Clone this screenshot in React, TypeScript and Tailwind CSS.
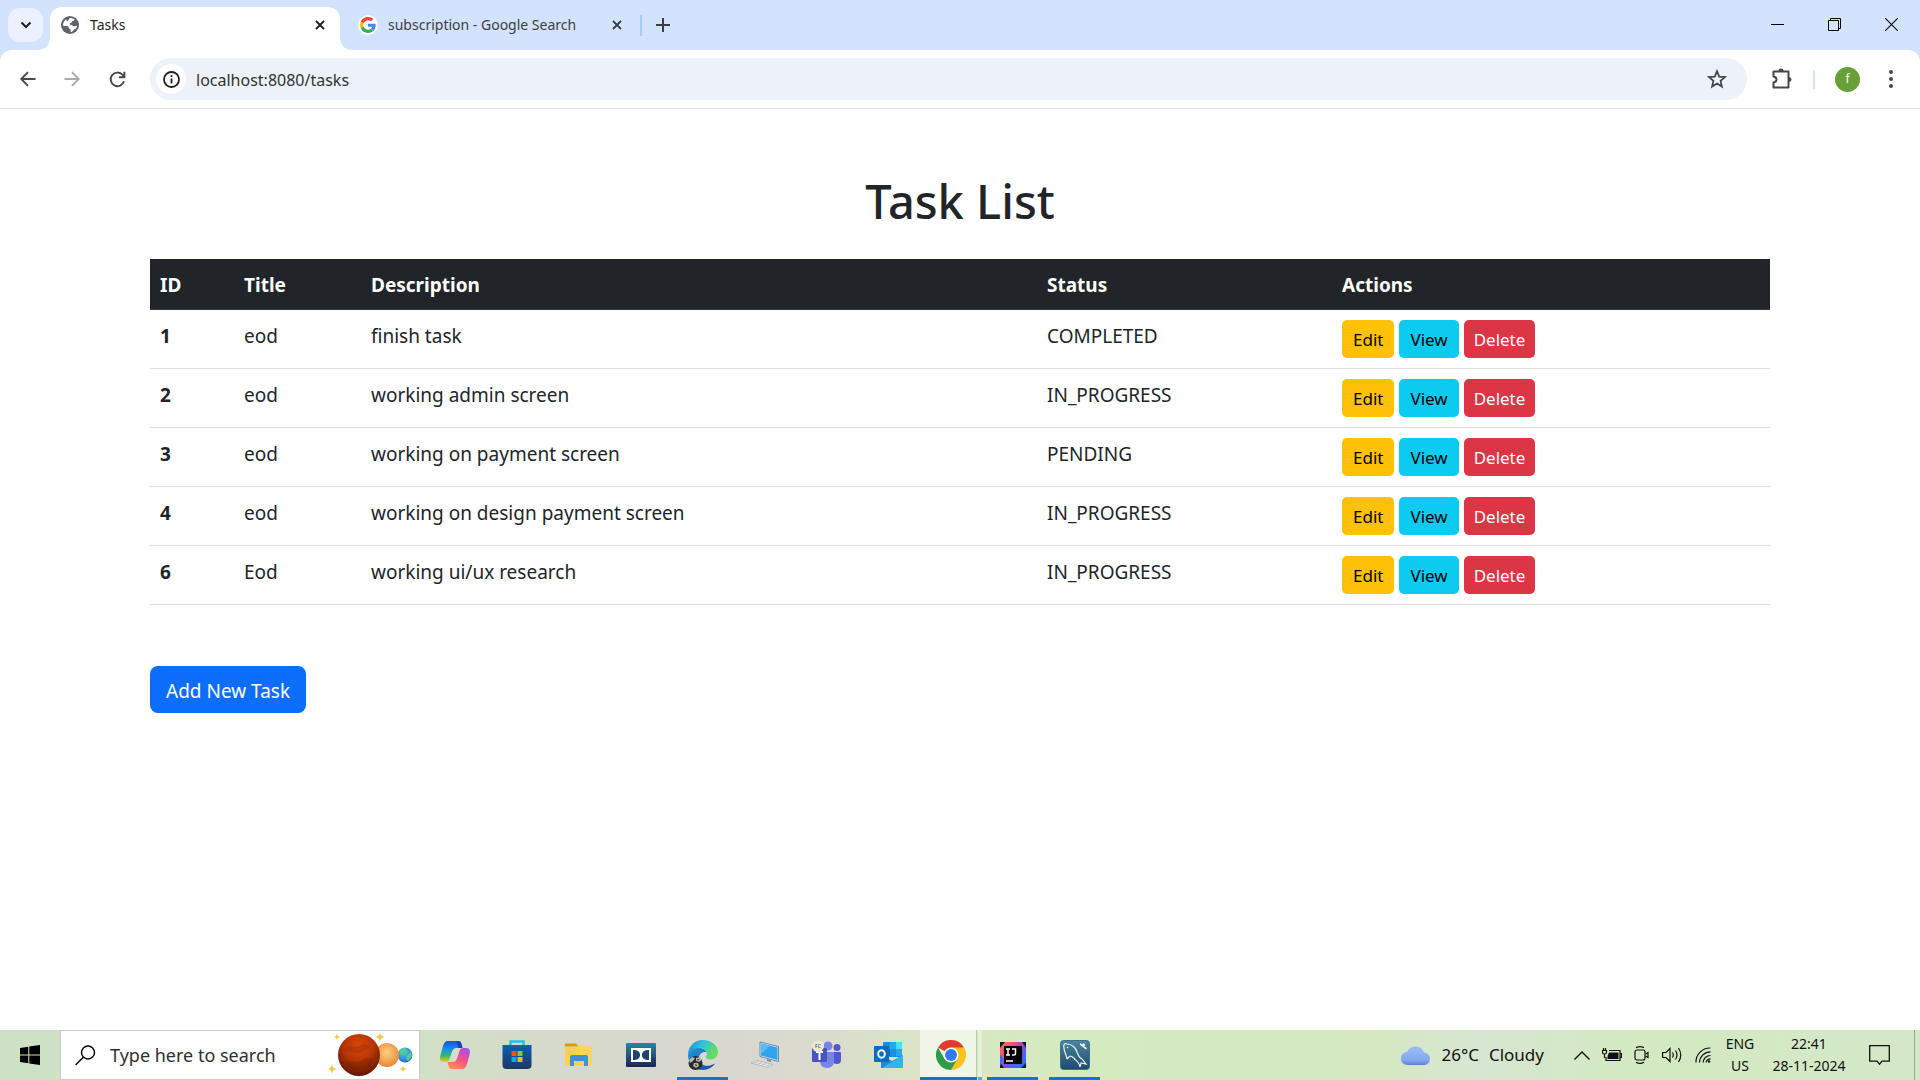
import React from "react";

type Task = { id: number; title: string; description: string; status: string };

const tasks: Task[] = [
  { id: 1, title: "eod", description: "finish task", status: "COMPLETED" },
  { id: 2, title: "eod", description: "working admin screen", status: "IN_PROGRESS" },
  { id: 3, title: "eod", description: "working on payment screen", status: "PENDING" },
  { id: 4, title: "eod", description: "working on design payment screen", status: "IN_PROGRESS" },
  { id: 6, title: "Eod", description: "working ui/ux research", status: "IN_PROGRESS" },
];

function CloseX() {
  return (
    <svg width="10" height="10" viewBox="0 0 10 10" stroke="currentColor" strokeWidth="1.8" fill="none">
      <path d="M1 1l8 8M9 1l-8 8" />
    </svg>
  );
}

function GlobeIcon() {
  return (
    <svg width="18" height="18" viewBox="0 0 18 18">
      <circle cx="9" cy="9" r="9" fill="#5f6368" />
      <path d="M9.2 1.9c1.700 0 3.200.5 4.400 1.500-.2 1.100-.9 1.600-1.800 1.700-1 .1-.9.900-1.200 1.500-.4.700-1.600.4-1.900 1.200-.3.900.6 1.100 1.500 1.100 1.300 0 1.500.9 2.400 1.200 1 .3 2.500-.3 3.400-.3-.1 1-.5 2.100-1.100 3-1.300.2-1.900.6-2.600 1.700-.6.800-1.500 1.500-2.400 1.500-.5-.6.100-1.500-.3-2.200-.5-.9-1.500-.9-1.700-2.100-.2-1.300-1.200-1.600-2.500-1.700L2 9.700C1.900 6.900 3.100 4.700 5 3.300c.5.500.3 1.500 1.100 1.700 1.300.3 1.200-1.300 1.800-2 .3-.4.700-.8 1.300-1.100z" fill="#fff" />
    </svg>
  );
}

function GoogleIcon() {
  return (
    <svg width="16" height="16" viewBox="0 0 48 48">
      <path fill="#EA4335" d="M24 9.500c3.540 0 6.710 1.220 9.210 3.600l6.850-6.850C35.900 2.380 30.470 0 24 0 14.620 0 6.510 5.380 2.560 13.220l7.980 6.190C12.430 13.720 17.740 9.500 24 9.500z" />
      <path fill="#4285F4" d="M46.980 24.550c0-1.570-.15-3.090-.38-4.550H24v9.020h12.940c-.58 2.960-2.260 5.480-4.780 7.180l7.730 6c4.510-4.180 7.090-10.360 7.090-17.650z" />
      <path fill="#FBBC05" d="M10.530 28.590c-.48-1.450-.76-2.990-.76-4.590s.27-3.140.76-4.590l-7.980-6.190C.92 16.460 0 20.120 0 24c0 3.880.92 7.540 2.560 10.780l7.970-6.190z" />
      <path fill="#34A853" d="M24 48c6.480 0 11.930-2.130 15.890-5.810l-7.730-6c-2.150 1.450-4.920 2.300-8.160 2.300-6.260 0-11.570-4.220-13.470-9.910l-7.980 6.190C6.510 42.620 14.620 48 24 48z" />
    </svg>
  );
}

function TabStrip() {
  return (
    <header className="flex h-[50px] items-start bg-[#d3e3fd] text-[#1f1f1f]">
      <button aria-label="Search tabs" className="mt-2 ml-2 flex h-[34px] w-[35px] items-center justify-center rounded-xl bg-[#ebf1fe]">
        <svg width="12" height="8" viewBox="0 0 12 8" fill="none" stroke="#1f1f1f" strokeWidth="2">
          <path d="M1.500 1.500L6 6l4.500-4.500" />
        </svg>
      </button>
      <div className="relative mt-[7px] ml-[7px] flex h-[43px] w-[290px] rounded-t-xl bg-white pb-[7px] pl-[11px]">
        <svg className="absolute bottom-0 -left-3" width="12" height="12" viewBox="0 0 12 12"><path d="M12 0v12H0C7 12 12 7 12 0z" fill="#fff" /></svg>
        <svg className="absolute -right-3 bottom-0" width="12" height="12" viewBox="0 0 12 12"><path d="M0 0v12h12C5 12 0 7 0 0z" fill="#fff" /></svg>
        <button className="flex grow items-center gap-[11px] text-left text-sm"><GlobeIcon />Tasks</button>
        <button aria-label="Close Tasks" className="flex w-10 items-center justify-center"><CloseX /></button>
      </div>
      <div className="mt-[7px] flex h-9 w-[302px] items-center border-r-2 border-[#a8c7fa] pl-[18px] [border-image:linear-gradient(transparent_9px,#a8c7fa_9px,#a8c7fa_28px,transparent_28px)_1]">
        <button className="flex grow items-center gap-[10px] text-left text-sm whitespace-nowrap text-[#3c4043]">
          <span className="flex size-5 items-center justify-center rounded-full bg-white"><GoogleIcon /></span>
          subscription - Google Search
        </button>
        <button aria-label="Close search" className="mr-[3px] flex w-10 items-center justify-center text-[#3c4043]"><CloseX /></button>
      </div>
      <button aria-label="New tab" className="mt-[7px] flex h-9 w-[42px] items-center justify-center">
        <svg width="14" height="14" viewBox="0 0 14 14" stroke="#3c4043" strokeWidth="2"><path d="M7 0v14M0 7h14" /></svg>
      </button>
      <div className="ml-auto flex h-12 items-center text-black">
        <button aria-label="Minimize" className="flex h-full w-[57px] items-center justify-center">
          <svg width="13" height="13" viewBox="0 0 13 13"><path d="M0 6h13v1H0z" fill="#000" /></svg>
        </button>
        <button aria-label="Restore" className="flex h-full w-[57px] items-center justify-center">
          <svg width="13" height="13" viewBox="0 0 13 13" fill="none" stroke="#000"><path d="M.5 2.500h10v10H.5zM2.500 2.500v-2h10v10h-2" /></svg>
        </button>
        <button aria-label="Close" className="flex h-full w-[57px] items-center justify-center">
          <svg width="13" height="13" viewBox="0 0 13 13" stroke="#111" strokeWidth="1.200"><path d="M0 0l13 13M13 0L0 13" /></svg>
        </button>
      </div>
    </header>
  );
}

function Toolbar() {
  return (
    <div className="bg-[#d3e3fd]">
      <div className="flex h-[59px] items-center rounded-t-xl border-b border-[#dedede] bg-white">
        <button aria-label="Back" className="flex w-11 justify-center pl-3">
          <svg width="16" height="16" viewBox="0 0 16 16" fill="none" stroke="#474747" strokeWidth="1.900"><path d="M15.500 8H1.500M8 1.200L1.300 8 8 14.800" /></svg>
        </button>
        <button aria-label="Forward" className="flex w-14 justify-center" disabled>
          <svg width="16" height="16" viewBox="0 0 16 16" fill="none" stroke="#ababab" strokeWidth="1.900"><path d="M.5 8h14M8 1.200L14.700 8 8 14.800" /></svg>
        </button>
        <button aria-label="Reload" className="mr-[15px] flex w-[35px] justify-center">
          <svg width="17" height="17" viewBox="0 0 17 17" fill="none" stroke="#474747" strokeWidth="1.900"><path d="M15 10.300A6.800 6.800 0 1 1 13.600 3.900L15.400 6M15.400.8V6.200H10" /></svg>
        </button>
        <div className="flex h-[42px] grow items-center rounded-full bg-[#ecf1fa] pr-5 pl-[6px]">
          <button aria-label="View site information" className="flex size-[30px] items-center justify-center rounded-full bg-white">
            <svg width="17" height="17" viewBox="0 0 17 17" fill="none" stroke="#1f1f1f" strokeWidth="1.800"><circle cx="8.500" cy="8.500" r="7.500" /><path d="M8.500 7.500v5M8.500 4.200v1.900" /></svg>
          </button>
          <input aria-label="Address" defaultValue="localhost:8080/tasks" className="ml-[10px] grow bg-transparent pt-px text-base text-[#333] outline-none" />
          <button aria-label="Bookmark this tab">
            <svg width="20" height="20" viewBox="0 0 20 20" fill="none" stroke="#474747" strokeWidth="1.800"><path d="M10 2.200l2.200 5.400 5.800.5-4.400 3.800 1.300 5.700-4.900-3-4.900 3 1.300-5.700L2 8.100l5.800-.5z" /></svg>
          </button>
        </div>
        <button aria-label="Extensions" className="ml-6 flex">
          <svg width="22" height="22" viewBox="0 0 22 22" fill="none" stroke="#474747" strokeWidth="2">
            <path d="M2.500 3.500h15v16h-15v-5c4-.5 4-5.500 0-6z" strokeLinejoin="round" />
            <path d="M7.500 3a2.500 2.500 0 0 1 5 0zM18 9a2.500 2.500 0 0 1 0 5z" fill="#474747" stroke="none" />
          </svg>
        </button>
        <span className="ml-5 h-[19px] w-[2px] bg-[#d3e3fd]" />
        <button aria-label="Profile" className="ml-5 flex size-[25px] items-center justify-center rounded-full bg-[#689f38] text-xs text-white">f</button>
        <button aria-label="Menu" className="mr-[18px] ml-5 flex w-[22px] justify-center">
          <svg width="4" height="18" viewBox="0 0 4 18" fill="#474747"><circle cx="2" cy="2" r="2" /><circle cx="2" cy="9" r="2" /><circle cx="2" cy="16" r="2" /></svg>
        </button>
      </div>
    </div>
  );
}

function TaskPage() {
  return (
    <main className="grow bg-white px-[150px] pt-[62px] text-[19px] leading-[30px] text-[#212529]">
      <h1 className="text-center text-[47px] leading-[60px] font-medium">Task List</h1>
      <table className="mt-7 w-full table-fixed border-collapse text-left">
        <colgroup>
          <col className="w-[84px]" />
          <col className="w-[127px]" />
          <col />
          <col className="w-[295px]" />
          <col className="w-[438px]" />
        </colgroup>
        <thead className="bg-[#212529] text-white">
          <tr className="border-b border-[#373b3e]">
            {["ID", "Title", "Description", "Status", "Actions"].map((h) => (
              <th key={h} scope="col" className="px-[10px] pt-[11px] pb-[9px] font-bold">{h}</th>
            ))}
          </tr>
        </thead>
        <tbody>
          {tasks.map((t) => (
            <tr key={t.id} className="border-b border-[#dee2e6] align-top">
              <th scope="row" className="px-[10px] pt-[11px] pb-[9px] font-bold">{t.id}</th>
              <td className="px-[10px] pt-[11px] pb-[9px]">{t.title}</td>
              <td className="px-[10px] pt-[11px] pb-[9px]">{t.description}</td>
              <td className="px-[10px] pt-[11px] pb-[9px]">{t.status}</td>
              <td className="p-[10px]">
                <div className="flex gap-[5px] text-[17px]">
                  <a href="#edit" className="flex h-[38px] items-center rounded-[5px] bg-[#ffc107] px-[11px] pt-px text-black">Edit</a>
                  <a href="#view" className="flex h-[38px] items-center rounded-[5px] bg-[#0dcaf0] px-[11px] pt-px text-black">View</a>
                  <button className="flex h-[38px] items-center rounded-[5px] bg-[#dc3545] px-[10px] pt-px text-white">Delete</button>
                </div>
              </td>
            </tr>
          ))}
        </tbody>
      </table>
      <a href="#new" className="mt-[61px] inline-flex h-[47px] items-center rounded-lg bg-[#0d6efd] px-4 pt-[2px] text-white">Add New Task</a>
    </main>
  );
}

function Planets() {
  const star = "M0-5C.8-1.500 1.500-.8 5 0 1.500.8.8 1.500 0 5-.8 1.500-1.500.8-5 0-1.500-.8-.8-1.500 0-5z";
  return (
    <svg width="86" height="48" viewBox="0 0 86 48" className="mr-1 shrink-0">
      <defs>
        <radialGradient id="mars" cx=".5" cy=".3" r=".7"><stop offset="0" stopColor="#d94a0a" /><stop offset=".5" stopColor="#b73505" /><stop offset="1" stopColor="#5e1703" /></radialGradient>
        <radialGradient id="venus" cx=".5" cy=".4" r=".6"><stop offset="0" stopColor="#ffd07a" /><stop offset="1" stopColor="#e8853a" /></radialGradient>
        <radialGradient id="earth" cx=".4" cy=".3" r=".7"><stop offset="0" stopColor="#5cc8f5" /><stop offset="1" stopColor="#2470d0" /></radialGradient>
      </defs>
      <circle cx="76" cy="24" r="7.500" fill="url(#earth)" />
      <path d="M71 19l4-2 3 2-1 4-3 1-3-2zM78 24l4-3 1 4-4 5-2-2z" fill="#4cd08a" />
      <circle cx="58" cy="24" r="12" fill="url(#venus)" />
      <circle cx="30" cy="24" r="21" fill="url(#mars)" />
      <path d="M14 20c5-8 12-2 18-6 3-2 8 0 10 4-5-1-7 4-12 4-6 1-9-4-16-2z" fill="#a52d05" opacity=".45" />
      <path d="M16 32c7-4 10 1 17-3 5-3 8-2 12-1-2 7-8 11-15 11-6 0-11-3-14-7z" fill="#6b1b03" opacity=".3" />
      <g fill="#ecc94b">
        <path d={star} transform="translate(8 6) scale(.7)" />
        <path d={star} transform="translate(51 6)" />
        <path d={star} transform="translate(3 38)" />
        <path d={star} transform="translate(74 38) scale(.7)" />
      </g>
    </svg>
  );
}

function CopilotIcon() {
  return (
    <svg width="32" height="32" viewBox="0 0 32 32">
      <defs>
        <linearGradient id="cpA" x1="0" y1="0" x2="0" y2="1"><stop offset="0" stopColor="#1b4fd6" /><stop offset=".4" stopColor="#1594e6" /><stop offset=".7" stopColor="#3bb56e" /><stop offset="1" stopColor="#f0cd23" /></linearGradient>
        <linearGradient id="cpB" x1=".8" y1="0" x2=".3" y2="1"><stop offset="0" stopColor="#a64df0" /><stop offset=".5" stopColor="#f2508a" /><stop offset="1" stopColor="#ff8d4d" /></linearGradient>
      </defs>
      <path d="M9 2h10c2 0 3 1 3.500 3l1 4h-6c-3 0-4 2-5 5l-2 6c-.6 2-1.500 3-3.500 3H5c-4 0-4.500-3-3.500-7L4 7c1-3 2-5 5-5z" fill="url(#cpA)" />
      <path d="M23 30H13c-2 0-3-1-3.500-3l-1-4h5c3 0 4-2 5-5l2-6c.6-2 1.500-3 3.500-3h3c4 0 4.500 3 3.500 7L28 25c-1 3-2 5-5 5z" fill="url(#cpB)" />
      <path d="M17 2h2c2 0 3 1 3.500 3l1 4h-4L17 2z" fill="#1845b8" />
    </svg>
  );
}

function StoreIcon() {
  return (
    <svg width="30" height="32" viewBox="0 0 30 32">
      <defs><linearGradient id="st" x1="0" y1="0" x2="0" y2="1"><stop offset="0" stopColor="#0a62b0" /><stop offset="1" stopColor="#1d3765" /></linearGradient></defs>
      <path d="M8.500 7V2.500h13V7" fill="none" stroke="#28bdf0" strokeWidth="2.500" />
      <path d="M.5 6h29v20a4 4 0 0 1-4 4h-21a4 4 0 0 1-4-4z" fill="url(#st)" />
      <path d="M9.500 12H14.500v5h-5z" fill="#f1511b" /><path d="M15.500 12h5v5h-5z" fill="#80cc28" /><path d="M9.500 18h5v5h-5z" fill="#00adef" /><path d="M15.500 18h5v5h-5z" fill="#fbbc09" />
    </svg>
  );
}

function ExplorerIcon() {
  return (
    <svg width="28" height="26" viewBox="0 0 28 26">
      <path d="M0 1.500h11l2.500 3H0z" fill="#d99a07" />
      <path d="M0 5l13-.5L15 3h12v20H0z" fill="#ffd562" />
      <path d="M0 5l13-.5L15 3V23H0z" fill="#ffcb45" opacity=".5" />
      <path d="M5 24V15q0-2 2-2h14q2 0 2 2v9h-4v-5H9v5z" fill="#3a94dc" />
    </svg>
  );
}

function DolbyIcon() {
  return (
    <svg width="30" height="24" viewBox="0 0 30 24">
      <defs><linearGradient id="db" x1="0" y1="0" x2="0" y2="1"><stop offset="0" stopColor="#25899e" /><stop offset="1" stopColor="#1c2458" /></linearGradient></defs>
      <rect width="30" height="24" rx="1" fill="url(#db)" />
      <rect x="5" y="5" width="20" height="14" fill="#fff" />
      <path d="M7 7h1.500c7.500 0 7.500 10 0 10H7zM23 7h-1.500c-7.500 0-7.500 10 0 10H23z" fill="#20426f" />
    </svg>
  );
}

function EdgeIcon() {
  return (
    <svg width="30" height="30" viewBox="0 0 30 30">
      <defs>
        <linearGradient id="eg" x1="0" y1="0" x2="1" y2=".4"><stop offset="0" stopColor="#1c86d1" /><stop offset=".5" stopColor="#2fc2df" /><stop offset="1" stopColor="#65de5e" /></linearGradient>
        <linearGradient id="eb" x1="0" y1="0" x2="1" y2="1"><stop offset="0" stopColor="#1b9de2" /><stop offset="1" stopColor="#134a9c" /></linearGradient>
      </defs>
      <path d="M15 0c9 0 15 6 15 12 0 5-4 7.500-7.500 7.500S18 18 18 17c0-.6 1-1.500 1-3.500C19 10 16 8 12 8S1 10 0 15C0 6 7 0 15 0z" fill="url(#eg)" />
      <path d="M0 15C1 10 6 8 11 8c4 0 7 2 7.500 4.500C15 11 11 14 11 18c0 5 5 9 11 7.500 2-.4 3.500-1.500 5-2C25 27 20 30 15 30 6 30 0 23 0 15z" fill="url(#eb)" />
      <circle cx="7.500" cy="23" r="7" fill="#292a2c" />
      <path d="M1 20l3-3 3 1-2 3-3 2zM8 18l4-1 2 3-3 2-3-1zM6 23l4 0 1 3-3 2-3-2z" fill="#b7b5ad" />
      <path d="M9 19l2 .5-1 1.500zM7 24l2 1-1 1.500z" fill="#111" />
    </svg>
  );
}

function ComputerIcon() {
  return (
    <svg width="28" height="28" viewBox="0 0 28 28">
      <path d="M9 1l18.500 4.500v15L9 15.500z" fill="#cfe6f5" stroke="#4f7a95" strokeWidth=".8" />
      <path d="M10 2.500L26.500 6.500V19L10 14.500z" fill="#30a3ed" />
      <path d="M10 2.500l9 2.200L10 13z" fill="#58bdf5" />
      <path d="M16 18l4 1v2l-4-1z" fill="#7c8a90" />
      <path d="M0 22l5.500-2.500L22 23.500 17 26.500z" fill="#eceeee" stroke="#a3abae" strokeWidth=".7" />
      <path d="M3 21l16 4M7 20l-3 2.500M11 21l-4 2.500M15 22l-4 2.500M19 23l-4 2.500" stroke="#b4babc" strokeWidth=".7" />
    </svg>
  );
}

function TeamsIcon() {
  return (
    <svg width="30" height="28" viewBox="0 0 30 28">
      <circle cx="25" cy="6.500" r="3.500" fill="#5059c9" /><path d="M20 11h8q1 0 1 1v7q0 4-4 4-5 0-5-5z" fill="#5059c9" />
      <circle cx="16" cy="5" r="4.500" fill="#7b83eb" /><path d="M8 11h14v9q0 7-7 7t-7-7z" fill="#7b83eb" />
      <rect x="0" y="7" width="15" height="14" rx="1" fill="#4b53bc" /><path d="M4 11h7M7.500 11v8" stroke="#fff" strokeWidth="2" />
      <circle cx="6" cy="5" r="6" fill="#e5ead8" />
      <text x="6" y="7" textAnchor="middle" fontSize="5" fill="#3a3a3a">FC</text>
    </svg>
  );
}

function OutlookIcon() {
  return (
    <svg width="30" height="28" viewBox="0 0 30 28">
      <path d="M9 2q0-1 1-1h17q1 0 1 1v14H9z" fill="#1490df" /><path d="M16 1h6v7h-6z" fill="#28a8ea" /><path d="M22 1h6v7h-6z" fill="#50d9ff" /><path d="M22 8h6v7h-6z" fill="#28a8ea" /><path d="M9 8h7v7H9z" fill="#0364b8" />
      <path d="M7 27V14l11 6 11-6v12q0 1-1 1z" fill="#1a8be0" /><path d="M29 14v12q0 1-1 1H8L29 14z" fill="#35b3f1" />
      <rect y="5" width="15" height="16" rx="1" fill="#0f6cbd" />
      <ellipse cx="7.500" cy="13" rx="3.300" ry="3.800" fill="none" stroke="#fff" strokeWidth="2" />
    </svg>
  );
}

function ChromeIcon() {
  return (
    <svg width="30" height="30" viewBox="0 0 48 48">
      <path d="M24 24L3.200 12A24 24 0 0 1 44.800 12z" fill="#e33b2e" />
      <path d="M24 12h20.800A24 24 0 0 1 24 48L34.400 30z" fill="#fcc31e" />
      <path d="M3.200 12A24 24 0 0 0 24 48L34.400 30H24L13.600 30z" fill="#2d9c49" />
      <circle cx="24" cy="24" r="12" fill="#fff" /><circle cx="24" cy="24" r="9.500" fill="#2f7af0" />
    </svg>
  );
}

function IntellijIcon() {
  return (
    <svg width="26" height="26" viewBox="0 0 26 26">
      <defs><linearGradient id="ij" x1="0" y1="0" x2="1" y2="1"><stop offset="0" stopColor="#fc801d" /><stop offset=".35" stopColor="#f0409a" /><stop offset=".55" stopColor="#7850e8" /><stop offset="1" stopColor="#087cfa" /></linearGradient></defs>
      <rect width="26" height="26" fill="url(#ij)" /><path d="M0 0h5L0 6zM26 0v6l-4-6zM0 26v-6l4 6zM26 26h-5l5-5z" fill="#1c1231" />
      <path d="M0 12l3 6-3 6z" fill="#087cfa" />
      <rect x="4" y="4" width="18" height="18" fill="#080308" />
      <path d="M6 7h4M8 7v6M6 13h4M12 7h3.500v4.500q0 1.500-1.500 1.500h-2M6 19h7" fill="none" stroke="#fff" strokeWidth="1.500" />
    </svg>
  );
}

function WorkbenchIcon() {
  return (
    <svg width="30" height="30" viewBox="0 0 30 30">
      <defs><linearGradient id="wb" x1="0" y1="0" x2="0" y2="1"><stop offset="0" stopColor="#4a86a2" /><stop offset="1" stopColor="#214a68" /></linearGradient></defs>
      <rect x=".5" y=".5" width="29" height="29" rx="3" fill="url(#wb)" stroke="#3d708c" />
      <path d="M7 19c0-3-3-7-3-11-1-4 1-5 3-4 5 0 9 4 10 8 1 3 3 6 5 7l4 5-5-1-1 4c-1-5-4-7-6-8M7 19l3-3c2 0 4 2 5 3M7 7l1 1" fill="none" stroke="#e7f2f7" strokeWidth="1.200" />
      <path d="M20 3l2 1.500L24 3l1 2-.5 1.500L27 8l-1 1.500-4-3-2-1.500z" fill="#f1f7fa" />
    </svg>
  );
}

const apps: { name: string; icon: () => React.ReactElement; state: string }[] = [
  { name: "Copilot", icon: CopilotIcon, state: "" },
  { name: "Microsoft Store", icon: StoreIcon, state: "" },
  { name: "File Explorer", icon: ExplorerIcon, state: "" },
  { name: "Dolby", icon: DolbyIcon, state: "" },
  { name: "Edge", icon: EdgeIcon, state: "open" },
  { name: "This PC", icon: ComputerIcon, state: "" },
  { name: "Teams", icon: TeamsIcon, state: "" },
  { name: "Outlook", icon: OutlookIcon, state: "" },
  { name: "Chrome", icon: ChromeIcon, state: "active" },
  { name: "IntelliJ IDEA", icon: IntellijIcon, state: "open" },
  { name: "MySQL Workbench", icon: WorkbenchIcon, state: "open" },
];

function AppButton({ name, icon: Icon, state }: (typeof apps)[number]) {
  return (
    <button aria-label={name} className="relative flex h-full w-[62px] items-center justify-center">
      {state === "active" && (
        <>
          <span className="absolute inset-y-0 left-0 w-[57px] border-r border-[#b5cf9f] bg-white/60" />
          <span className="absolute inset-y-0 right-0 w-1 bg-white/40" />
          <span className="absolute bottom-0 left-0 h-[3px] w-[57px] bg-[#0078d7]" />
          <span className="absolute right-0 bottom-0 h-[3px] w-1 bg-[#5ba6dc]" />
        </>
      )}
      {state === "open" && <span className="absolute bottom-0 left-[5px] h-[3px] w-[51px] bg-[#0078d7]" />}
      <span className="relative">
        <Icon />
      </span>
    </button>
  );
}

function Taskbar() {
  return (
    <footer className="flex h-[50px] shrink-0 bg-[linear-gradient(90deg,#cde2c5_0%,#d0e2c6_21%,#d6d9cb_29%,#d9d8d0_38%,#dbdacf_42%,#d9e5c6_48%,#d5eabf_55%,#d5e8c2_72%,#d7e6d2_77%,#d3e9c1_85%,#d4e8c7_100%)] text-[#111]">
      <button aria-label="Start" className="flex w-[60px] items-center justify-center">
        <svg width="20" height="20" viewBox="0 0 20 20"><path d="M0 3l8.300-1.200v7.700H0zM9.300 1.600L20 0v9.500H9.300zM0 10.500h8.300v7.700L0 17zM9.300 10.500H20V20L9.300 18.400z" /></svg>
      </button>
      <label className="flex w-[360px] items-center border border-[#c9ccc9] bg-white pl-[14px]">
        <svg width="21" height="21" viewBox="0 0 21 21" fill="none" stroke="#000" strokeWidth="1.400"><circle cx="13" cy="7.500" r="6.500" /><path d="M8.300 12.200L.6 20" /></svg>
        <input aria-label="Search" placeholder="Type here to search" className="ml-[14px] w-0 grow bg-transparent text-lg outline-none placeholder:text-[#303030]" />
        <Planets />
      </label>
      <div className="ml-1 flex">
        {apps.map((a) => <AppButton key={a.name} {...a} />)}
      </div>
      <div className="ml-auto flex items-center">
        <button className="flex items-center gap-[10px] text-[17px] whitespace-nowrap">
          <svg width="30" height="20" viewBox="0 0 30 20">
            <defs><linearGradient id="cl" x1="0" y1="0" x2="0" y2="1"><stop offset="0" stopColor="#9dbcf8" /><stop offset=".7" stopColor="#86a9ef" /><stop offset="1" stopColor="#5f84d8" /></linearGradient></defs>
            <path d="M6.500 20a6.500 6.500 0 0 1-.3-13A9 9 0 0 1 23 7.500a6.300 6.300 0 0 1 .8 12.500z" fill="url(#cl)" />
          </svg>
          26°C<span>Cloudy</span>
        </button>
        <div className="ml-[30px] flex items-center gap-3">
          <button aria-label="Show hidden icons"><svg width="16" height="9" viewBox="0 0 16 9" fill="none" stroke="#111" strokeWidth="1.400"><path d="M.5 8.500L8 1l7.500 7.500" /></svg></button>
          <button aria-label="Battery">
            <svg width="20" height="14" viewBox="0 0 20 14" fill="none" stroke="#111" strokeWidth="1.200"><path d="M7 2.500h11v10H4V9M18.500 5.500h1v4h-1M1.500 0v2M3.500 0v2M.5 2.500h4v2q0 1.500-2 1.500T.5 4.500zM2.500 6v4" /><path d="M7 4.500h9.500v6.500H5.500V8z" fill="#111" stroke="none" /></svg>
          </button>
          <button aria-label="Meet now">
            <svg width="16" height="18" viewBox="0 0 16 18" fill="none" stroke="#111" strokeWidth="1.200"><rect x="1" y="4" width="10" height="10" rx="2" /><path d="M11.500 8l2.500-1.500v5L11.500 10M2 1.800Q6-.5 10 1.800M2 16.200q4 2.300 8 0" /></svg>
          </button>
          <button aria-label="Volume">
            <svg width="21" height="16" viewBox="0 0 21 16" fill="none" stroke="#111" strokeWidth="1.200"><path d="M.6 5.500H4L8 1.500v13l-4-4H.6zM10.500 5.500q1.500 2.500 0 5M13.500 3.500q3 4.500 0 9M16.500 1q4.500 7 0 14" /></svg>
          </button>
          <button aria-label="Network">
            <svg width="16" height="16" viewBox="0 0 16 16" fill="none" stroke="#111" strokeWidth="1.200"><path d="M1 15.500A14 14 0 0 1 15.500 1M4.500 15.500A11 11 0 0 1 15.500 4.800M8 15.500a7.500 7.500 0 0 1 7.500-7M11 15.500q.5-3.500 4.500-3.700" /><circle cx="14" cy="14.500" r="1.200" fill="#111" stroke="none" /></svg>
          </button>
        </div>
        <button className="ml-3 flex w-[34px] flex-col items-center text-sm leading-[22px]"><span>ENG</span><span>US</span></button>
        <button className="ml-3 flex w-[80px] flex-col items-center text-sm leading-[22px] whitespace-nowrap"><span>22:41</span><span>28-11-2024</span></button>
        <button aria-label="Notifications" className="ml-5">
          <svg width="21" height="21" viewBox="0 0 21 21" fill="none" stroke="#111" strokeWidth="1.300"><path d="M.7.700h19.600v15.500H13l-2.500 3-2.500-3H.7z" /></svg>
        </button>
        <span className="ml-6 h-full w-[6px] border-l border-[#98a88d]" />
      </div>
    </footer>
  );
}

export default function App() {
  return (
    <div className="flex min-h-screen flex-col bg-white font-['Noto_Sans',sans-serif]">
      <TabStrip />
      <Toolbar />
      <TaskPage />
      <Taskbar />
    </div>
  );
}
